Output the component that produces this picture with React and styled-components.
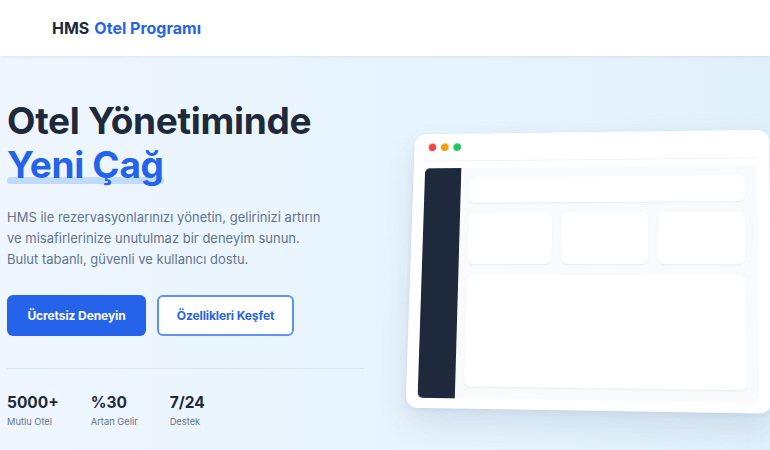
import styled, { createGlobalStyle } from "styled-components";

const GlobalStyle = createGlobalStyle`
  * { box-sizing: border-box; }
  body {
    margin: 0;
    font-family: Inter, "Noto Sans", "Liberation Sans", sans-serif;
    background: #eef6fd;
  }
`;

const Page = styled.div`
  width: 770px;
  height: 450px;
  overflow: hidden;
  background: linear-gradient(90deg, #eff6ff 0%, #e6f4fd 60%, #e0f0fb 100%);
`;

const Header = styled.header`
  height: 56px;
  background: #ffffff;
  display: flex;
  align-items: center;
  padding-left: 52px;
  box-shadow: 0 1px 3px rgba(15, 23, 42, 0.08);
  position: relative;
  z-index: 1;
`;

const Logo = styled.div`
  font-size: 16px;
  font-weight: 700;
  color: #1e293b;

  span {
    color: #2563eb;
    margin-left: 5px;
  }
`;

const Hero = styled.section`
  display: flex;
  align-items: flex-start;
  padding: 43px 0 0 7px;
  gap: 42px;
`;

const Left = styled.div`
  width: 357px;
  flex-shrink: 0;
`;

const Title = styled.h1`
  margin: 0;
  font-size: 37px;
  line-height: 44px;
  font-weight: 700;
  color: #1e293b;
  letter-spacing: -0.3px;
`;

const Accent = styled.span`
  color: #2563eb;
  position: relative;
  z-index: 0;
  display: inline-block;

  &::after {
    content: "";
    position: absolute;
    left: 0;
    right: 0;
    bottom: 3px;
    height: 7px;
    border-radius: 4px;
    background: #bfdbfe;
    z-index: -1;
  }
`;

const Lead = styled.p`
  margin: 20px 0 0;
  white-space: nowrap;
  font-size: 13px;
  line-height: 21px;
  color: #64748b;
`;

const Actions = styled.div`
  display: flex;
  gap: 11px;
  margin-top: 25px;
`;

const Button = styled.button`
  width: ${(p) => (p.$outline ? "137px" : "139px")};
  height: 41px;
  padding: 0;
  border-radius: 6px;
  font-family: inherit;
  font-size: 12px;
  font-weight: 700;
  letter-spacing: -0.1px;
  cursor: pointer;
  background: ${(p) => (p.$outline ? "#ffffff" : "#2563eb")};
  color: ${(p) => (p.$outline ? "#2563eb" : "#ffffff")};
  border: ${(p) => (p.$outline ? "2px solid #5b93f7" : "none")};
`;

const Divider = styled.hr`
  margin: 32px 0 0;
  border: none;
  border-top: 1px solid #dbe7f3;
`;

const Stats = styled.div`
  display: flex;
  gap: 32px;
  margin-top: 24px;
`;

const Stat = styled.div`
  display: flex;
  flex-direction: column;
`;

const StatValue = styled.div`
  font-size: 15.5px;
  line-height: 19px;
  font-weight: 700;
  color: #1e293b;
`;

const StatLabel = styled.div`
  margin-top: 4px;
  font-size: 9.3px;
  line-height: 11px;
  color: #64748b;
`;

const Right = styled.div`
  padding-top: 30px;
  perspective: 1000px;
`;

const Window = styled.div`
  width: 362px;
  background: #ffffff;
  border-radius: 12px;
  padding: 10px 12px 10px;
  box-shadow: 0 14px 30px rgba(30, 64, 110, 0.12), 0 2px 6px rgba(30, 64, 110, 0.06);
  transform: rotateY(-6deg) rotateX(7deg);
`;

const TitleBar = styled.div`
  display: flex;
  gap: 5px;
  padding: 0 0 10px 3px;
  border-bottom: 1px solid #eef2f6;
`;

const Dot = styled.span`
  width: 8px;
  height: 8px;
  border-radius: 50%;
  background: ${(p) => p.$color};
`;

const Body = styled.div`
  margin-top: 7px;
  height: 234px;
  display: flex;
  background: #f8fafc;
  border-radius: 6px;
`;

const Sidebar = styled.div`
  width: 38px;
  background: #1e293b;
  border-radius: 5px 0 0 5px;
`;

const Content = styled.div`
  flex: 1;
  display: flex;
  flex-direction: column;
  gap: 11px;
  padding: 10px 12px 12px 9px;
`;

const Panel = styled.div`
  background: #ffffff;
  border-radius: 6px;
  box-shadow: 0 1px 2px rgba(15, 23, 42, 0.06);
  height: ${(p) => p.$h || "auto"};
  flex: ${(p) => (p.$grow ? 1 : "none")};
`;

const Cards = styled.div`
  display: grid;
  grid-template-columns: repeat(3, 1fr);
  gap: 10px;
`;

export default function App() {
  return (
    <>
      <GlobalStyle />
      <Page>
        <Header>
          <Logo>
            HMS<span>Otel Programı</span>
          </Logo>
        </Header>
        <Hero>
          <Left>
            <Title>
              Otel Yönetiminde
              <br />
              <Accent>Yeni Çağ</Accent>
            </Title>
            <Lead>
              HMS ile rezervasyonlarınızı yönetin, gelirinizi artırın
              <br />
              ve misafirlerinize unutulmaz bir deneyim sunun.
              <br />
              Bulut tabanlı, güvenli ve kullanıcı dostu.
            </Lead>
            <Actions>
              <Button>Ücretsiz Deneyin</Button>
              <Button $outline>Özellikleri Keşfet</Button>
            </Actions>
            <Divider />
            <Stats>
              <Stat>
                <StatValue>5000+</StatValue>
                <StatLabel>Mutlu Otel</StatLabel>
              </Stat>
              <Stat>
                <StatValue>%30</StatValue>
                <StatLabel>Artan Gelir</StatLabel>
              </Stat>
              <Stat>
                <StatValue>7/24</StatValue>
                <StatLabel>Destek</StatLabel>
              </Stat>
            </Stats>
          </Left>
          <Right>
            <Window>
              <TitleBar>
                <Dot $color="#ef4444" />
                <Dot $color="#f59e0b" />
                <Dot $color="#22c55e" />
              </TitleBar>
              <Body>
                <Sidebar />
                <Content>
                  <Panel $h="26px" />
                  <Cards>
                    <Panel $h="52px" />
                    <Panel $h="52px" />
                    <Panel $h="52px" />
                  </Cards>
                  <Panel $grow />
                </Content>
              </Body>
            </Window>
          </Right>
        </Hero>
      </Page>
    </>
  );
}
